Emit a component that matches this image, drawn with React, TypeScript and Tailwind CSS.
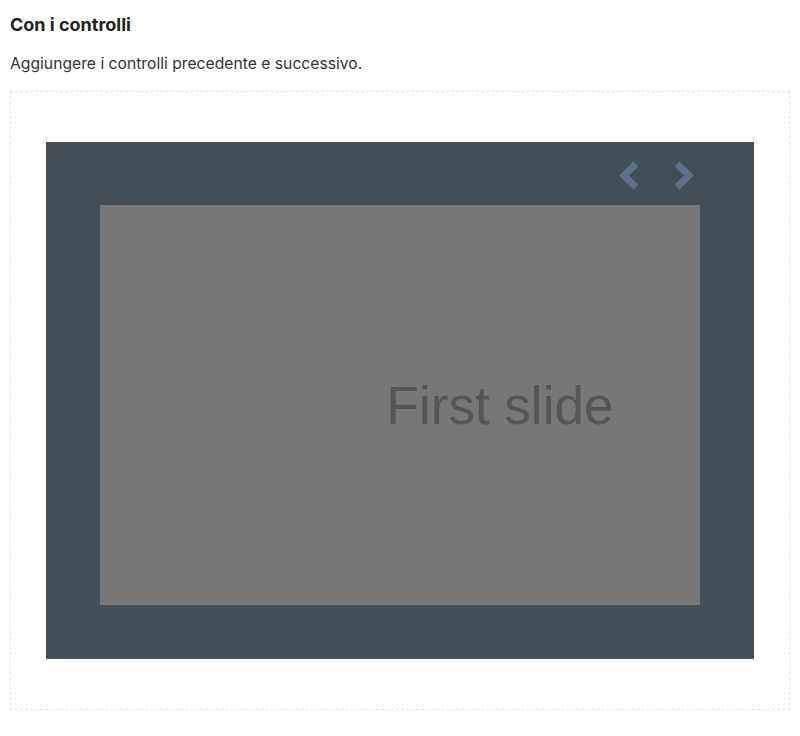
export default function App() {
  return (
    <div className="min-h-screen bg-white px-[10px] pt-[13px] font-['Inter',sans-serif] text-[#333]">
      <h3 className="text-[18px] font-bold leading-[24px] text-[#222]">Con i controlli</h3>
      <p className="mt-[16px] text-[15.7px] leading-[22px]">Aggiungere i controlli precedente e successivo.</p>
      <div className="mt-[16px] h-[619px] border border-dashed border-[#e3e3e3] px-[35px] py-[50px]">
        <div className="flex h-[517px] flex-col bg-[#444e57] px-[54px] pb-[54px]">
          <div className="flex h-[63px] items-center justify-end gap-[31px] pr-[5px] pt-[4px]">
            <button aria-label="Precedente">
              <svg width="23" height="31" viewBox="0 0 23 31">
                <polyline points="18,4 6,15.5 18,27" fill="none" stroke="#5b7089" strokeWidth="7" />
              </svg>
            </button>
            <button aria-label="Successivo">
              <svg width="23" height="31" viewBox="0 0 23 31">
                <polyline points="5,4 17,15.5 5,27" fill="none" stroke="#5b7089" strokeWidth="7" />
              </svg>
            </button>
          </div>
          <div className="flex h-[400px] items-center justify-center bg-[#777] pl-[200px]">
            <span className="font-['Liberation_Sans',Arial,sans-serif] text-[53px] leading-none text-[#555]">First slide</span>
          </div>
        </div>
      </div>
    </div>
  );
}
